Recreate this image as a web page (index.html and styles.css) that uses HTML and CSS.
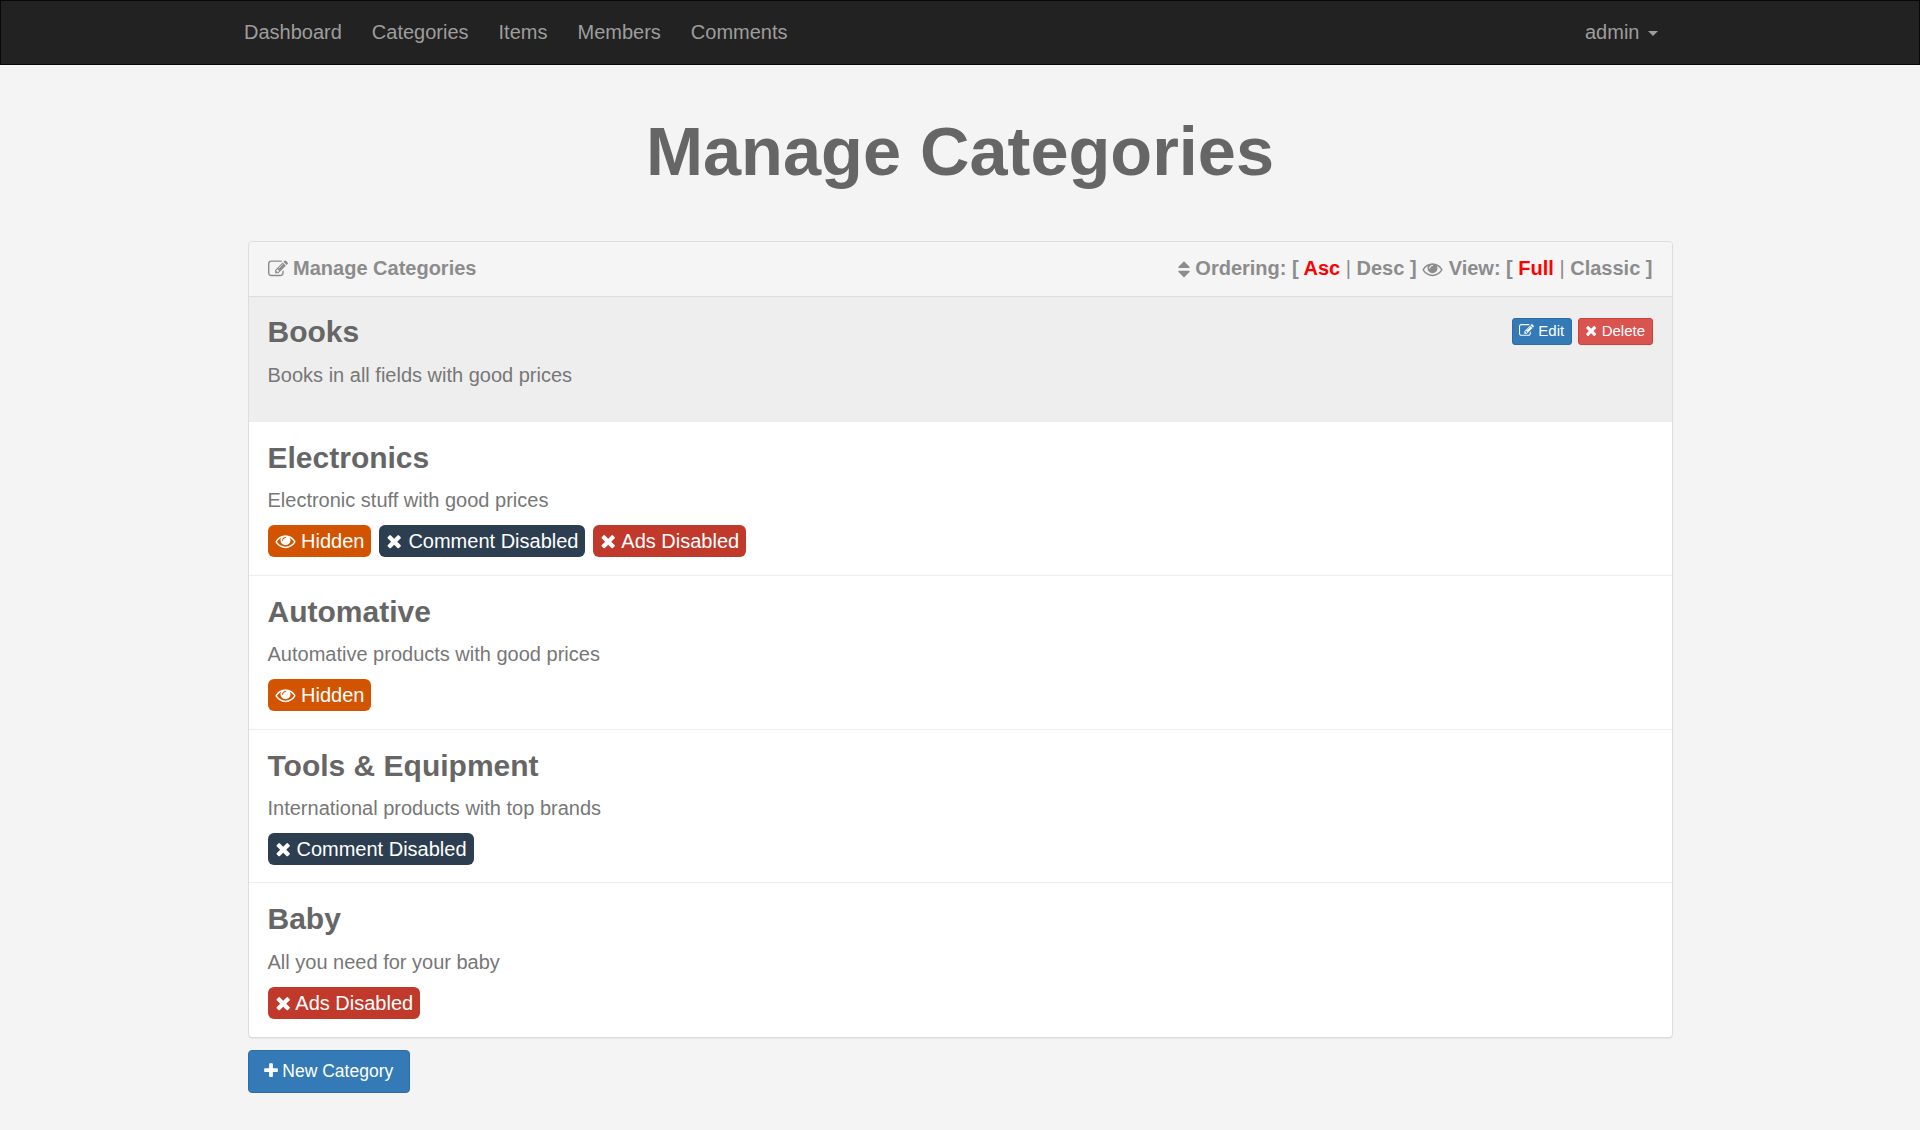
FILE: index.html
```html
<!DOCTYPE html>
<html lang="en">
<head>

	<!-- Page title -->
	<title>Manage Categories</title>

	<!-- Meta tags -->
	<meta charset="UTF-8">
	<meta name="viewport" content="width=device-width, initial-scale=1.0">

	<!-- Style -->
	<link rel="stylesheet" href="styles.css">

</head>
<body>

<!-- Icons -->
<svg class="sprite" xmlns="http://www.w3.org/2000/svg">
	<symbol id="i-times" viewBox="0 0 1408 1792"><path d="M1298 1322q0 40-28 68l-136 136q-28 28-68 28t-68-28l-294-294-294 294q-28 28-68 28t-68-28l-136-136q-28-28-28-68t28-68l294-294-294-294q-28-28-28-68t28-68l136-136q28-28 68-28t68 28l294 294 294-294q28-28 68-28t68 28l136 136q28 28 28 68t-28 68l-294 294 294 294q28 28 28 68z"/></symbol>
	<symbol id="i-plus" viewBox="0 0 1408 1792"><path d="M1408 736v192q0 40-28 68t-68 28h-416v416q0 40-28 68t-68 28h-192q-40 0-68-28t-28-68v-416h-416q-40 0-68-28t-28-68v-192q0-40 28-68t68-28h416v-416q0-40 28-68t68-28h192q40 0 68 28t28 68v416h416q40 0 68 28t28 68z"/></symbol>
	<symbol id="i-sort" viewBox="0 0 1024 1792"><path d="M1024 1120q0 26-19 45l-448 448q-19 19-45 19t-45-19l-448-448q-19-19-19-45t19-45 45-19h896q26 0 45 19t19 45zm0-384q0 26-19 45t-45 19h-896q-26 0-45-19t-19-45 19-45l448-448q19-19 45-19t45 19l448 448q19 19 19 45z"/></symbol>
	<symbol id="i-eye" viewBox="0 0 1792 1792"><path d="M1664 960q-152-236-381-353 61 104 61 225 0 185-131.500 316.500t-316.500 131.500-316.500-131.500-131.500-316.500q0-121 61-225-229 117-381 353 133 205 333.500 326.500t434.500 121.500 434.500-121.500 333.500-326.500zm-720-384q0-20-14-34t-34-14q-125 0-214.500 89.500t-89.500 214.500q0 20 14 34t34 14 34-14 14-34q0-86 61-147t147-61q20 0 34-14t14-34zm848 384q0 34-20 69-140 230-376.500 368.500t-499.500 138.500-499.500-139-376.500-368q-20-35-20-69t20-69q140-229 376.500-368t499.500-139 499.500 139 376.500 368q20 35 20 69z"/></symbol>
	<symbol id="i-edit" viewBox="0 0 1792 1792"><path d="M888 1184l116-116-152-152-116 116v56h96v96h56zm440-720q-16-16-33 1l-350 350q-17 17-1 33t33-1l350-350q17-17 1-33zm80 594v190q0 119-84.500 203.500t-203.500 84.500h-832q-119 0-203.500-84.500t-84.500-203.500v-832q0-119 84.500-203.500t203.500-84.500h832q63 0 117 25 15 7 18 23 3 17-9 29l-49 49q-14 14-32 8-23-6-45-6h-832q-66 0-113 47t-47 113v832q0 66 47 113t113 47h832q66 0 113-47t47-113v-126q0-13 9-22l64-64q15-15 35-7t20 29zm-96-738l288 288-672 672h-288v-288zm444 132l-92 92-288-288 92-92q28-28 68-28t68 28l152 152q28 28 28 68t-28 68z"/></symbol>
</svg>

<!-- Navbar -->
<nav class="navbar">
	<ul class="nav-links">
		<li><a href="#">Dashboard</a></li>
		<li><a href="#">Categories</a></li>
		<li><a href="#">Items</a></li>
		<li><a href="#">Members</a></li>
		<li><a href="#">Comments</a></li>
	</ul>
	<a class="nav-user" href="#">admin <span class="caret"></span></a>
</nav>

<main class="container">

	<h1>Manage Categories</h1>

	<div class="panel">

		<!-- Panel heading -->
		<div class="panel-heading">
			<div class="panel-title">
				<svg class="icon"><use href="#i-edit"/></svg> Manage Categories
			</div>
			<div class="option">
				<svg class="icon icon-sort"><use href="#i-sort"/></svg> Ordering: [
				<a class="active" href="#">Asc</a> <span class="sep">|</span>
				<a href="#">Desc</a> ]
				<svg class="icon icon-eye"><use href="#i-eye"/></svg> View: [
				<a class="active" href="#">Full</a> <span class="sep">|</span>
				<a href="#">Classic</a> ]
			</div>
		</div>

		<!-- Categories -->
		<div class="cat cat-hover">
			<div class="cat-buttons">
				<a class="btn-xs btn-blue" href="#"><svg class="icon"><use href="#i-edit"/></svg> Edit</a>
				<a class="btn-xs btn-red" href="#"><svg class="icon icon-narrow"><use href="#i-times"/></svg> Delete</a>
			</div>
			<h3>Books</h3>
			<p>Books in all fields with good prices</p>
		</div>

		<div class="cat">
			<h3>Electronics</h3>
			<p>Electronic stuff with good prices</p>
			<div class="tags">
				<span class="tag tag-hidden"><svg class="icon icon-eye"><use href="#i-eye"/></svg> Hidden</span>
				<span class="tag tag-comment"><svg class="icon icon-narrow"><use href="#i-times"/></svg> Comment Disabled</span>
				<span class="tag tag-ads"><svg class="icon icon-narrow"><use href="#i-times"/></svg> Ads Disabled</span>
			</div>
		</div>

		<div class="cat">
			<h3>Automative</h3>
			<p>Automative products with good prices</p>
			<div class="tags">
				<span class="tag tag-hidden"><svg class="icon icon-eye"><use href="#i-eye"/></svg> Hidden</span>
			</div>
		</div>

		<div class="cat cat-short">
			<h3>Tools &amp; Equipment</h3>
			<p>International products with top brands</p>
			<div class="tags">
				<span class="tag tag-comment"><svg class="icon icon-narrow"><use href="#i-times"/></svg> Comment Disabled</span>
			</div>
		</div>

		<div class="cat">
			<h3>Baby</h3>
			<p>All you need for your baby</p>
			<div class="tags">
				<span class="tag tag-ads"><svg class="icon icon-narrow"><use href="#i-times"/></svg> Ads Disabled</span>
			</div>
		</div>

	</div>

	<a class="btn-new" href="#"><svg class="icon icon-plus"><use href="#i-plus"/></svg> New Category</a>

</main>
</body>
</html>
```

FILE: styles.css
```css
* {
	box-sizing: border-box;
}

html,
body {
	margin: 0;
	height: 100%;
}

body {
	background-color: #f4f4f4;
	font-family: "Liberation Sans", Arial, sans-serif;
	font-size: 20px;
	color: #666;
}

a {
	color: inherit;
	text-decoration: none;
}

.sprite {
	display: none;
}

.icon {
	width: 1em;
	height: 1em;
	fill: currentColor;
	vertical-align: -0.14em;
}

.icon-narrow {
	width: .82em;
}

.icon-plus {
	width: .8em;
}

.icon-sort {
	width: .6em;
}

.icon-eye {
	width: 1.05em;
}

/* Navbar */
.navbar {
	display: flex;
	justify-content: space-between;
	align-items: center;
	height: 65px;
	background: #222;
	border: 1px solid #080808;
	padding: 0 261px 0 228px;
	color: #9d9d9d;
}

.nav-links {
	display: flex;
	list-style: none;
	margin: 0;
	padding: 0;
}

.nav-links a {
	display: block;
	padding: 0 15px;
}

.caret {
	display: inline-block;
	margin-left: 3px;
	vertical-align: middle;
	border-top: 5px solid;
	border-left: 5px solid transparent;
	border-right: 5px solid transparent;
}

/* Page */
.container {
	width: 1425px;
	margin: 0 auto;
}

h1 {
	margin: 0;
	padding: 47px 0 49px;
	font-size: 68.5px;
	line-height: 80px;
	text-align: center;
	color: #666;
}

.panel {
	background: #fff;
	border: 1px solid #ddd;
	border-radius: 4px;
	box-shadow: 0 1px 1px rgba(0, 0, 0, .05);
}

.panel-heading {
	display: flex;
	justify-content: space-between;
	align-items: center;
	height: 55px;
	padding: 0 19px 2px;
	background: #f5f5f5;
	border-bottom: 1px solid #ddd;
	border-radius: 3px 3px 0 0;
	font-weight: bold;
	color: #8c8c8c;
}

.option a {
	color: #8c8c8c;
}

.option a.active {
	color: #f00;
}

.panel-heading .icon {
	vertical-align: -.2em;
}

.sep {
	font-weight: normal;
}

/* Category rows */
.cat {
	height: 154px;
	padding: 15px 19px 0;
	border-bottom: 1px solid #eee;
}

.cat + .cat {
	padding-top: 16px;
}

.cat-short {
	height: 153px;
}

.cat:last-child {
	border-bottom: 0;
}

.cat-hover {
	height: 125px;
	background: #eee;
}

.cat h3 {
	margin: 0;
	font-size: 30px;
	line-height: 40px;
}

.cat p {
	margin: 8px 0 0;
	line-height: 30px;
	color: #777;
}

.cat + .cat p {
	margin-top: 7px;
}

.cat:last-child p {
	margin-top: 8px;
}

.cat-buttons {
	float: right;
	display: flex;
	gap: 6px;
	margin-top: 6px;
}

.btn-xs {
	height: 27px;
	padding: 0 6.5px;
	border-radius: 3px;
	font-size: 15px;
	line-height: 23px;
	color: #fff;
}

.btn-blue {
	background: #337ab7;
	border: 1px solid #2e6da4;
}

.btn-red {
	background: #d9534f;
	border: 1px solid #d43f3a;
}

.tags {
	display: flex;
	gap: 8px;
	margin-top: 10px;
}

.tag {
	height: 32px;
	padding: 0 7px;
	border-radius: 6px;
	line-height: 33px;
	color: #fff;
}

.tag-hidden {
	background: #d35400;
}

.tag-comment {
	background: #2c3e50;
}

.tag-ads {
	background: #c0392b;
}

.btn-new {
	display: inline-block;
	height: 43px;
	margin-top: 12px;
	padding: 0 16px 0 15px;
	background: #337ab7;
	border: 1px solid #2e6da4;
	border-radius: 4px;
	font-size: 17.5px;
	line-height: 40px;
	color: #fff;
}
```
